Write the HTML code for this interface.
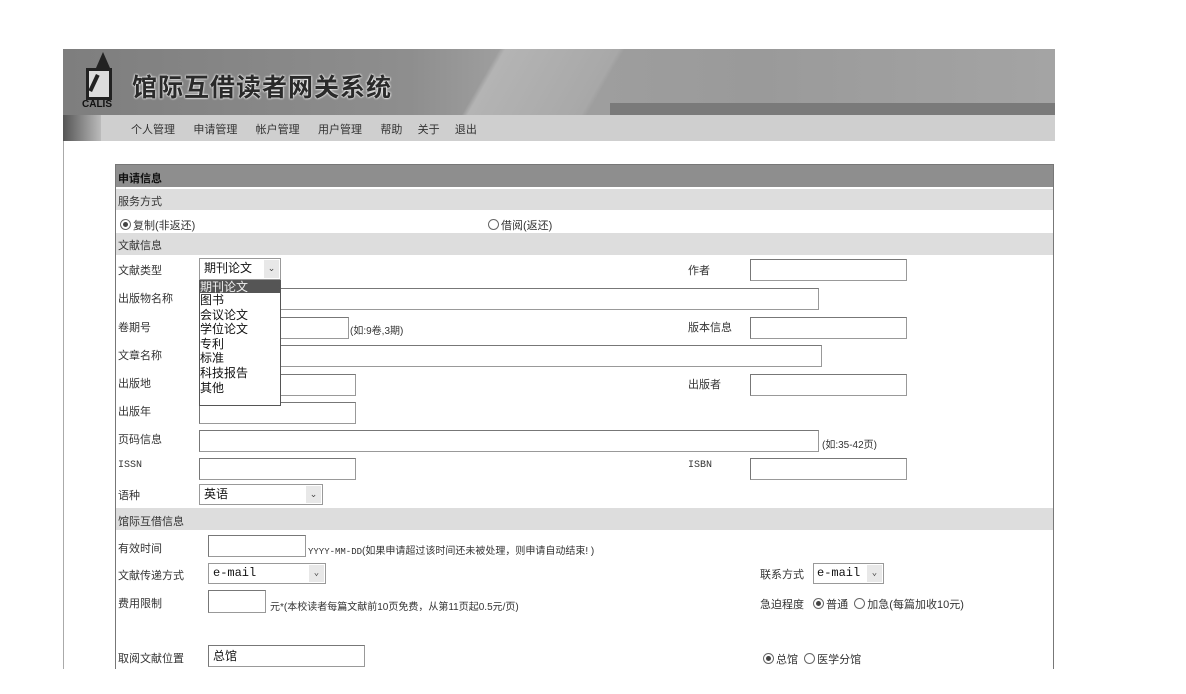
<!DOCTYPE html>
<html><head><meta charset="utf-8"><style>
body{margin:0;width:1186px;height:694px;background:#fff;position:relative;overflow:hidden;font-family:"Liberation Sans","Noto Sans CJK SC",sans-serif;font-size:11px;color:#333}
.a{position:absolute;white-space:nowrap}
.in{position:absolute;border:1px solid #999;background:#fff;box-sizing:border-box;border-top-color:#777;border-left-color:#777}
.sel{position:absolute;border:1px solid #999;background:#fff;box-sizing:border-box;font-size:12px;color:#111;padding-left:4px;line-height:18px}
.sel b{position:absolute;right:1px;top:1px;bottom:1px;width:15px;background:#e8e8e8;font-weight:normal;font-size:9px;text-align:center;line-height:17px;color:#444}
.row{position:absolute;left:116px;width:937px;background:#ddd}
.r{display:inline-block;width:9px;height:9px;border:1px solid #666;border-radius:50%;vertical-align:-1px;margin-right:2px;position:relative;background:#fff}
.r.on:after{content:"";position:absolute;left:2px;top:2px;width:5px;height:5px;border-radius:50%;background:#444}
</style></head><body>
<div class="a" style="left:63px;top:49px;width:992px;height:620px;border-left:1px solid #aaa"></div>
<div class="a" style="left:63px;top:49px;width:992px;height:66px;background:linear-gradient(90deg,#7e7e7e 0%,#8e8e8e 35%,#a0a0a0 45%,#9a9a9a 70%,#a4a4a4 100%)"></div>
<div class="a" style="left:440px;top:49px;width:260px;height:66px;background:linear-gradient(120deg,transparent 20%,#b4b4b4 22%,#a8a8a8 60%,transparent 62%)"></div>
<div class="a" style="left:610px;top:103px;width:445px;height:12px;background:#7a7a7a"></div>
<div class="a" style="left:63px;top:115px;width:992px;height:26px;background:#cfcfcf"></div>
<div class="a" style="left:63px;top:115px;width:38px;height:26px;background:linear-gradient(90deg,#555,#bbb)"></div>
<div class="a" style="left:96px;top:52px;width:0;height:0;border-left:7px solid transparent;border-right:7px solid transparent;border-bottom:16px solid #222"></div>
<div class="a" style="left:86px;top:68px;width:20px;height:26px;border:3px solid #222;background:#ddd"></div>
<div class="a" style="left:92px;top:74px;width:4px;height:18px;background:#222;transform:rotate(25deg)"></div>
<div class="a" style="left:82px;top:99px;font-size:10px;font-weight:bold;color:#111">CALIS</div>
<div class="a" style="left:132px;top:68px;font-size:25px;font-weight:bold;color:#2a2a2a;letter-spacing:1px;text-shadow:0 0 2px #fff,0 0 2px #fff">馆际互借读者网关系统</div>
<div class="a" style="left:131px;top:121px;font-size:11px;color:#333;word-spacing:0">个人管理&nbsp;&nbsp;&nbsp;&nbsp;&nbsp;&nbsp;申请管理&nbsp;&nbsp;&nbsp;&nbsp;&nbsp;&nbsp;帐户管理&nbsp;&nbsp;&nbsp;&nbsp;&nbsp;&nbsp;用户管理&nbsp;&nbsp;&nbsp;&nbsp;&nbsp;&nbsp;帮助&nbsp;&nbsp;&nbsp;&nbsp;&nbsp;关于&nbsp;&nbsp;&nbsp;&nbsp;&nbsp;退出</div>

<div class="a" style="left:115px;top:164px;width:937px;height:505px;border:1px solid #777;border-bottom:none"></div>
<div class="row" style="top:165px;height:22px;background:#8e8e8e;"></div>
<div class="a" style="left:118px;top:170px;font-weight:bold;color:#111">申请信息</div>
<div class="row" style="top:189px;height:21px"></div>
<div class="a" style="left:118px;top:193px">服务方式</div>
<div class="a" style="left:120px;top:217px"><span class="r on"></span>复制(非返还)</div>
<div class="a" style="left:488px;top:217px"><span class="r"></span>借阅(返还)</div>
<div class="row" style="top:233px;height:22px"></div>
<div class="a" style="left:118px;top:237px">文献信息</div>

<div class="a" style="left:118px;top:262px">文献类型</div>
<div class="sel" style="left:199px;top:258px;width:82px;height:22px">期刊论文<b>⌄</b></div>
<div class="a" style="left:688px;top:262px">作者</div>
<div class="in" style="left:750px;top:259px;width:157px;height:22px"></div>

<div class="a" style="left:118px;top:290px">出版物名称</div>
<div class="in" style="left:199px;top:288px;width:620px;height:22px"></div>
<div class="a" style="left:118px;top:319px">卷期号</div>
<div class="in" style="left:199px;top:317px;width:150px;height:22px"></div>
<div class="a" style="left:350px;top:322px;font-size:10px">(如:9卷,3期)</div>
<div class="a" style="left:688px;top:319px">版本信息</div>
<div class="in" style="left:750px;top:317px;width:157px;height:22px"></div>
<div class="a" style="left:118px;top:347px">文章名称</div>
<div class="in" style="left:199px;top:345px;width:623px;height:22px"></div>
<div class="a" style="left:118px;top:375px">出版地</div>
<div class="in" style="left:199px;top:374px;width:157px;height:22px"></div>
<div class="a" style="left:688px;top:376px">出版者</div>
<div class="in" style="left:750px;top:374px;width:157px;height:22px"></div>
<div class="a" style="left:118px;top:403px">出版年</div>
<div class="in" style="left:199px;top:402px;width:157px;height:22px"></div>
<div class="a" style="left:118px;top:431px">页码信息</div>
<div class="in" style="left:199px;top:430px;width:620px;height:22px"></div>
<div class="a" style="left:822px;top:436px;font-size:10px">(如:35-42页)</div>
<div class="a" style="left:118px;top:460px;font-family:'Liberation Mono',monospace;font-size:10px">ISSN</div>
<div class="in" style="left:199px;top:458px;width:157px;height:22px"></div>
<div class="a" style="left:688px;top:460px;font-family:'Liberation Mono',monospace;font-size:10px">ISBN</div>
<div class="in" style="left:750px;top:458px;width:157px;height:22px"></div>
<div class="a" style="left:118px;top:487px">语种</div>
<div class="sel" style="left:199px;top:484px;width:124px;height:21px">英语<b>⌄</b></div>

<div class="a" style="left:199px;top:280px;width:82px;height:126px;border:1px solid #555;background:#fff;box-sizing:border-box;font-size:12px;line-height:14.6px;color:#111">
<div style="background:#555;color:#eee;line-height:12px">期刊论文</div><div>图书</div><div>会议论文</div><div>学位论文</div><div>专利</div><div>标准</div><div>科技报告</div><div>其他</div></div>

<div class="row" style="top:508px;height:22px"></div>
<div class="a" style="left:118px;top:513px">馆际互借信息</div>
<div class="a" style="left:118px;top:540px">有效时间</div>
<div class="in" style="left:208px;top:535px;width:98px;height:22px"></div>
<div class="a" style="left:308px;top:542px;font-size:10px"><span style="font-family:'Liberation Mono',monospace;font-size:9px">YYYY-MM-DD</span>(如果申请超过该时间还未被处理，则申请自动结束! )</div>
<div class="a" style="left:118px;top:567px">文献传递方式</div>
<div class="sel" style="left:208px;top:563px;width:118px;height:21px;font-family:'Liberation Mono',monospace">e-mail<b>⌄</b></div>
<div class="a" style="left:760px;top:566px">联系方式</div>
<div class="sel" style="left:813px;top:563px;width:71px;height:21px;font-family:'Liberation Mono',monospace;padding-left:3px">e-mail<b>⌄</b></div>
<div class="a" style="left:118px;top:595px">费用限制</div>
<div class="in" style="left:208px;top:590px;width:58px;height:23px"></div>
<div class="a" style="left:270px;top:598px;font-size:10px">元*(本校读者每篇文献前10页免费，从第11页起0.5元/页)</div>
<div class="a" style="left:760px;top:596px">急迫程度&nbsp;&nbsp;&nbsp;<span class="r on"></span>普通&nbsp;&nbsp;<span class="r"></span>加急(每篇加收10元)</div>
<div class="a" style="left:118px;top:650px">取阅文献位置</div>
<div class="in" style="left:208px;top:645px;width:157px;height:22px;font-size:12px;padding-left:4px;line-height:20px;color:#111">总馆</div>
<div class="a" style="left:763px;top:651px"><span class="r on"></span>总馆&nbsp;&nbsp;<span class="r"></span>医学分馆</div>
<div class="a" style="left:0;top:669px;width:1186px;height:25px;background:#fff"></div>
</body></html>
